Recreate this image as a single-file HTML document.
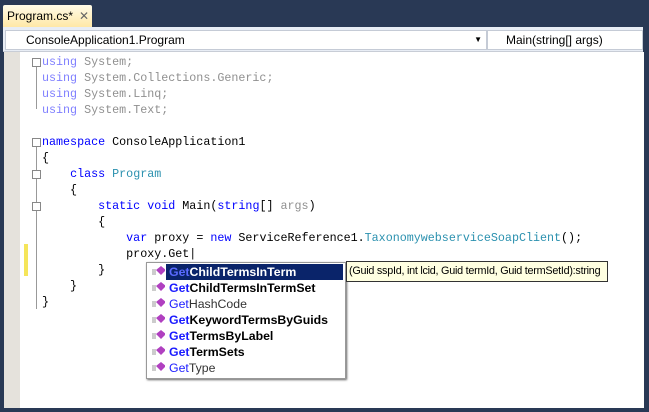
<!DOCTYPE html>
<html><head><style>
body{margin:0;width:649px;height:412px;background:#293955;position:relative;overflow:hidden;font-family:"Liberation Sans",sans-serif}
.tab{position:absolute;left:3px;top:5px;width:89px;height:22px;background:linear-gradient(#fffbe8,#ffe8a6);border-radius:2px 2px 0 0;font-size:12px;line-height:22px}
.tab span{position:absolute;left:4px}
.tab b{position:absolute;left:76px;font-weight:normal;color:#666;font-size:12px}
.nav{position:absolute;left:3px;top:27px;width:640px;height:24px;background:#e8edf5;border-bottom:1px solid #c8cdd6}
.box{position:absolute;top:3px;height:18px;background:#fff;border:1px solid #c5cbd6;font-size:12px;line-height:18px;white-space:nowrap}
.ed{position:absolute;left:4px;top:52px;width:640px;height:356px;background:#fff}
.gut{position:absolute;left:0;top:0;width:16px;height:356px;background:#e5e2dc}
pre{position:absolute;left:38px;top:2px;margin:0;font-family:"Liberation Mono",monospace;font-size:11.7px;line-height:16px;color:#000}
.k{color:#0000ff}.t{color:#2b91af}.g{color:#8080ff}.gr{color:#909090}
.pop{position:absolute;left:146px;top:262px;width:198px;height:115px;background:#fff;border:1px solid #999;box-shadow:1px 1px 2px #666}
.it{position:absolute;left:22px;height:16px;font-size:12.3px;line-height:16px;font-weight:bold;color:#000;white-space:nowrap}
.it i{font-style:normal;color:#1a1aff}
.ic{position:absolute;left:4px;width:14px;height:16px}
.tip{position:absolute;left:346px;top:261px;width:262px;height:21px;background:#ffffe1;border:1px solid #333;font-size:10.8px;letter-spacing:-0.25px;line-height:19px;padding-left:2px;box-sizing:border-box;white-space:nowrap;overflow:hidden}
.fold{position:absolute;width:7px;height:7px;border:1px solid #888;background:#fff;left:28px}
.vl{position:absolute;left:32px;border-left:1px solid #999}
</style></head><body>
<div class="tab"><span>Program.cs*</span><b>✕</b></div>
<div class="nav">
<div class="box" style="left:2px;width:480px"><span style="margin-left:20px">ConsoleApplication1.Program</span><span style="position:absolute;right:4px;font-size:8px">▼</span></div>
<div class="box" style="left:484px;width:154px"><span style="margin-left:18px">Main(string[] args)</span></div>
</div>
<div class="ed">
<div class="gut"></div>
<div style="position:absolute;left:20px;top:192px;width:4px;height:32px;background:#f5e55a"></div>
<div class="fold" style="top:6px"></div><div class="vl" style="top:15px;height:42px"></div>
<div class="fold" style="top:86px"></div><div class="vl" style="top:95px;height:162px"></div>
<div class="fold" style="top:118px"></div>
<div class="fold" style="top:150px"></div>
<pre><span class="g">using</span> <span class="gr">System;</span>
<span class="g">using</span> <span class="gr">System.Collections.Generic;</span>
<span class="g">using</span> <span class="gr">System.Linq;</span>
<span class="g">using</span> <span class="gr">System.Text;</span>

<span class="k">namespace</span> ConsoleApplication1
{
    <span class="k">class</span> <span class="t">Program</span>
    {
        <span class="k">static</span> <span class="k">void</span> Main(<span class="k">string</span>[] <span class="gr">args</span>)
        {
            <span class="k">var</span> proxy = <span class="k">new</span> ServiceReference1.<span class="t">TaxonomywebserviceSoapClient</span>();
            proxy.Get|
        }
    }
}</pre>
</div>
<div class="pop">
<div style="position:absolute;left:19px;top:1px;width:177px;height:16px;background:#0a246a"></div>
<div class="it" style="top:1px;color:#fff"><i style="color:#5a6bff">Get</i>ChildTermsInTerm</div>
<div class="it" style="top:17px"><i>Get</i>ChildTermsInTermSet</div>
<div class="it" style="top:33px;font-weight:normal;color:#333"><i>Get</i>HashCode</div>
<div class="it" style="top:49px"><i>Get</i>KeywordTermsByGuids</div>
<div class="it" style="top:65px"><i>Get</i>TermsByLabel</div>
<div class="it" style="top:81px"><i>Get</i>TermSets</div>
<div class="it" style="top:97px;font-weight:normal;color:#333"><i>Get</i>Type</div>
<svg class="ic" style="top:0;height:115px" width="16" height="115">
<g id="d"><path d="M1 7h4M1 9h4M1 11h4" stroke="#999"/><path d="M10 3l5 4-5 5-5-5z" fill="#b040c0"/></g>
<use href="#d" y="16"/><use href="#d" y="32"/><use href="#d" y="48"/><use href="#d" y="64"/><use href="#d" y="80"/><use href="#d" y="96"/>
</svg>
</div>
<div class="tip">(Guid sspId, int lcid, Guid termId, Guid termSetId):string</div>
</body></html>
